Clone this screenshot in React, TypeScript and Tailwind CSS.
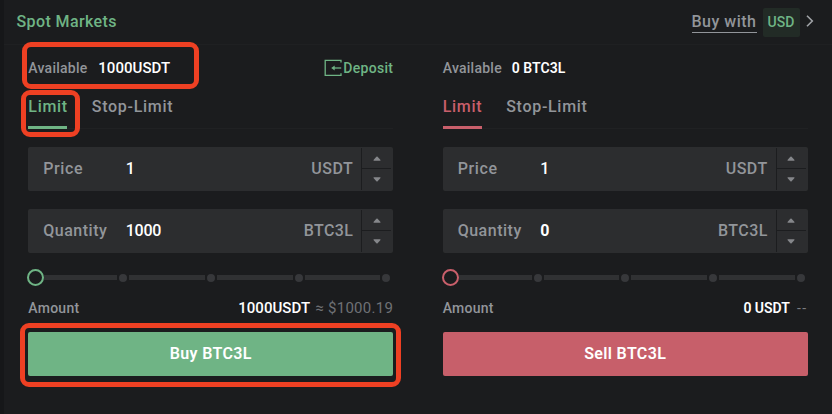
import React from 'react';

interface FieldProps {
  label: string;
  value: string;
  unit: string;
  bold?: boolean;
  labelClass: string;
  valueClass: string;
  unitClass: string;
}

const Field: React.FC<FieldProps> = ({ label, value, unit, bold, labelClass, valueClass, unitClass }) => (
  <div className="flex h-[43.5px] w-full items-stretch rounded-[2px] bg-[#2c2d2f]">
    <div className="flex flex-1 items-center whitespace-nowrap pl-[15px] pr-[8px] pt-px text-[16px] font-medium">
      <span className={`w-[82.5px] text-[#92959a] ${labelClass}`}>{label}</span>
      <span className={`flex-1 text-white ${bold ? 'font-bold' : ''} ${valueClass}`}>{value}</span>
      <span className={`text-[#92959a] ${unitClass}`}>{unit}</span>
    </div>
    <div className="my-px flex w-[32px] flex-col border-l border-[#1c1d1f]">
      <button className="mr-[2px] flex flex-1 items-center justify-center border-b border-[#1c1d1f]">
        <svg width="8" height="5" viewBox="0 0 8 5" fill="#85878b"><path d="M0.5 4.1 3.4 0.7Q4 0.1 4.6 0.7L7.5 4.1Q7.7 4.8 7 4.8H1Q0.3 4.8 0.5 4.1Z" /></svg>
      </button>
      <button className="mr-[2px] flex flex-1 items-center justify-center">
        <svg width="8" height="5" viewBox="0 0 8 5" fill="#85878b"><path d="M0.5 0.9 3.4 4.3Q4 4.9 4.6 4.3L7.5 0.9Q7.7 0.2 7 0.2H1Q0.3 0.2 0.5 0.9Z" /></svg>
      </button>
    </div>
  </div>
);

const Slider: React.FC<{ ring: string }> = ({ ring }) => (
  <div className="-ml-[1px] mr-[3px] flex h-[17px] items-center">
    <div className={`size-[17px] shrink-0 rounded-full border-2 ${ring}`} />
    {[1, 2, 3, 4].map(step => (
      <React.Fragment key={step}>
        <div className={`h-[5px] bg-[#303133] ${step === 1 ? 'w-[73px]' : 'ml-[2px] flex-1'}`} />
        <div className="ml-[2px] size-[8px] shrink-0 rounded-full bg-[#37383b]" />
      </React.Fragment>
    ))}
  </div>
);

const DepositIcon = () => (
  <svg width="18" height="18" viewBox="0 0 18 18" fill="none" stroke="#6fb485" strokeWidth="1.3">
    <path d="M17 3.6V1.4H1.2V16.4H17V14.2" />
    <path d="M17.2 9H9" />
    <path d="M10.7 6.5V11.5L7.2 9Z" fill="#6fb485" stroke="none" />
  </svg>
);

interface OrderFormProps {
  side: 'buy' | 'sell';
}

const OrderForm: React.FC<OrderFormProps> = ({ side }) => {
  const isBuy = side === 'buy';

  return (
    <section className="flex w-[365px] flex-col">
      <div className="mt-[11px] flex h-[24px] items-center whitespace-nowrap text-[14px] font-medium">
        <span className="w-[70px] tracking-[0.25px] text-[#92959a]">Available</span>
        {isBuy
          ? <span className="text-[15px] tracking-[0.05px] text-white">1000USDT</span>
          : <span className="-ml-px font-semibold tracking-[0.05px] text-white">0 BTC3L</span>}
        {isBuy && (
          <button className="ml-auto flex items-center gap-[1.5px] tracking-[0.3px] text-[#6fb485]">
            <DepositIcon />
            Deposit
          </button>
        )}
      </div>

      <div className="mt-[14px] flex h-[35px] gap-[24.5px] border-b border-[#202123] text-[16px] font-medium leading-[26px]">
        <div className={`h-[35px] w-[39px] whitespace-nowrap border-b-[3px] tracking-[0.7px] ${isBuy ? 'border-[#6fb485] text-[#6fb485]' : 'border-[#c95f6b] text-[#c95f6b]'}`}>Limit</div>
        <div className="tracking-[0.7px] text-[#92959a]">Stop-Limit</div>
      </div>

      <div className="mt-[18px] flex flex-col gap-[18.5px]">
        <Field label="Price" value="1" unit="USDT" labelClass="tracking-[0.6px]" valueClass="" unitClass="tracking-[0.5px]" />
        <Field
          label="Quantity"
          value={isBuy ? '1000' : '0'}
          unit="BTC3L"
          bold={!isBuy}
          labelClass="tracking-[0.5px]"
          valueClass="tracking-[-0.3px]"
          unitClass="tracking-[0.4px]"
        />
      </div>

      <div className="mt-[16.5px]">
        <Slider ring={isBuy ? 'border-[#6fb485]' : 'border-[#c95f6b]'} />
      </div>

      <div className="mt-[11px] flex h-[22px] items-center justify-between whitespace-nowrap text-[14px] font-medium">
        <span className="tracking-[0.25px] text-[#92959a]">Amount</span>
        {isBuy ? (
          <span className="text-[15px] tracking-[0.05px] text-white">
            1000USDT<span className="ml-[5px] font-normal tracking-[0.3px] text-[#6f7175]">≈ $1000.19</span>
          </span>
        ) : (
          <span className="font-semibold text-white">
            0 USDT<span className="ml-[7px] font-normal tracking-[1.5px] text-[#7b7d81]">--</span>
          </span>
        )}
      </div>

      <button className={`mt-[13px] h-[44px] rounded-[2px] text-[16px] font-semibold tracking-[0.35px] text-white ${isBuy ? 'bg-[#6fb485]' : 'bg-[#c75f6a]'}`}>
        {isBuy ? 'Buy BTC3L' : 'Sell BTC3L'}
      </button>
    </section>
  );
};

export default function App() {
  return (
    <div className="relative h-[414px] w-[832px] overflow-hidden border-l-4 border-[#161719] bg-[#1b1c1e] font-['Roboto',sans-serif]">
      <header className="flex h-[45px] items-center border-b border-[#1f2022] pl-[12.5px] pr-[18.5px] text-[16px] font-medium">
        <h1 className="tracking-[0.4px] text-[#6fb485]">Spot Markets</h1>
        <div className="ml-auto flex items-center text-[#92959a]">
          <span className="border-b border-[#92959a] leading-[20px] tracking-[0.5px]">Buy with</span>
          <span className="ml-[6px] flex h-[29px] w-[37px] items-center justify-center rounded-[2px] bg-[#222b26] text-[14px] text-[#6fb485]">USD</span>
          <svg className="-mt-[2px] ml-[6px]" width="8" height="14" viewBox="0 0 8 14" fill="none" stroke="#a0a3a7" strokeWidth="1.6"><path d="M1 1.7 6.3 7 1 12.3" /></svg>
        </div>
      </header>

      <main className="flex gap-[49.4px] pl-[24.3px]">
        <OrderForm side="buy" />
        <OrderForm side="sell" />
      </main>

      {/* highlighted steps */}
      <div className="absolute left-[17.5px] top-[42px] h-[47px] w-[177px] rounded-[9px] border-[5px] border-[#ee4023]" />
      <div className="absolute left-[17px] top-[90px] h-[47px] w-[59px] rounded-[9px] border-[5px] border-[#ee4023]" />
      <div className="absolute left-[15.5px] top-[323px] h-[64px] w-[381px] rounded-[9px] border-[5px] border-[#ee4023]" />
    </div>
  );
}
